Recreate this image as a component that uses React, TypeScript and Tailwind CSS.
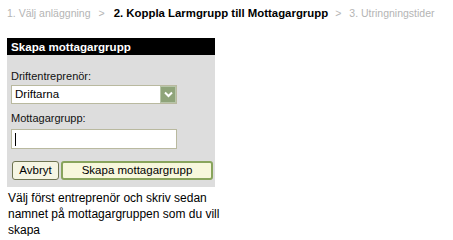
import React from "react";

export default function App() {
  return (
    <div className="w-[453px] h-[236px] bg-white overflow-hidden font-['Liberation_Sans',Arial,sans-serif] text-black">
      <div className="flex items-center h-[28px] pl-[7px] whitespace-nowrap">
        <span className="text-[10.5px] text-[#b4b4b4]">1. Välj anläggning</span>
        <span className="text-[10.5px] text-[#b4b4b4] ml-[8px] mr-[9px]">&gt;</span>
        <span className="text-[11.4px] font-bold text-black">2. Koppla Larmgrupp till Mottagargrupp</span>
        <span className="text-[10.5px] text-[#b4b4b4] ml-[7px] mr-[8px]">&gt;</span>
        <span className="text-[10.5px] text-[#b4b4b4]">3. Utringningstider</span>
      </div>
      <div className="ml-[7px] mt-[10px] w-[208px]">
        <div className="h-[17px] bg-black text-white font-bold text-[11.6px] leading-[17px] pl-[4px]">
          Skapa mottagargrupp
        </div>
        <div className="bg-[#dddddd] h-[132px] pl-[4px] pt-[15px]">
          <div className="text-[11px] leading-[13px] text-[#111]">Driftentreprenör:</div>
          <div className="mt-[2px] w-[166px] h-[19px] bg-white border border-[#b9b99f] flex items-center justify-between">
            <span className="text-[11.5px] pl-[3px]">Driftarna</span>
            <div className="w-[16px] h-[17px] bg-[#8fa47a] border border-[#b7c5a8] flex items-center justify-center">
              <svg width="9" height="7" viewBox="0 0 9 7">
                <path d="M1 1.5 L4.5 5 L8 1.5" stroke="white" strokeWidth="2" fill="none" />
              </svg>
            </div>
          </div>
          <div className="mt-[8px] text-[11px] leading-[13px] text-[#111]">Mottagargrupp:</div>
          <div className="mt-[4px] w-[166px] h-[20px] bg-white border border-[#b9b99f] flex items-center pl-[3px]">
            <div className="w-[1px] h-[13px] bg-black" />
          </div>
          <div className="mt-[12px] flex gap-[2px] pl-[1px]">
            <button className="w-[47px] h-[19px] rounded-[3px] border border-[#6e7451] bg-[#f5f5e3] text-[11.5px] leading-[17px] text-black">
              Avbryt
            </button>
            <button className="w-[152px] h-[19px] rounded-[3px] border-2 border-[#88a45c] bg-[#f7f7dc] text-[11.5px] leading-[15px] text-black">
              Skapa mottagargrupp
            </button>
          </div>
        </div>
      </div>
      <div className="pl-[8px] pt-[3px] text-[12px] leading-[16px] text-black w-[220px]">
        Välj först entreprenör och skriv sedan namnet på mottagargruppen som du vill skapa
      </div>
    </div>
  );
}
